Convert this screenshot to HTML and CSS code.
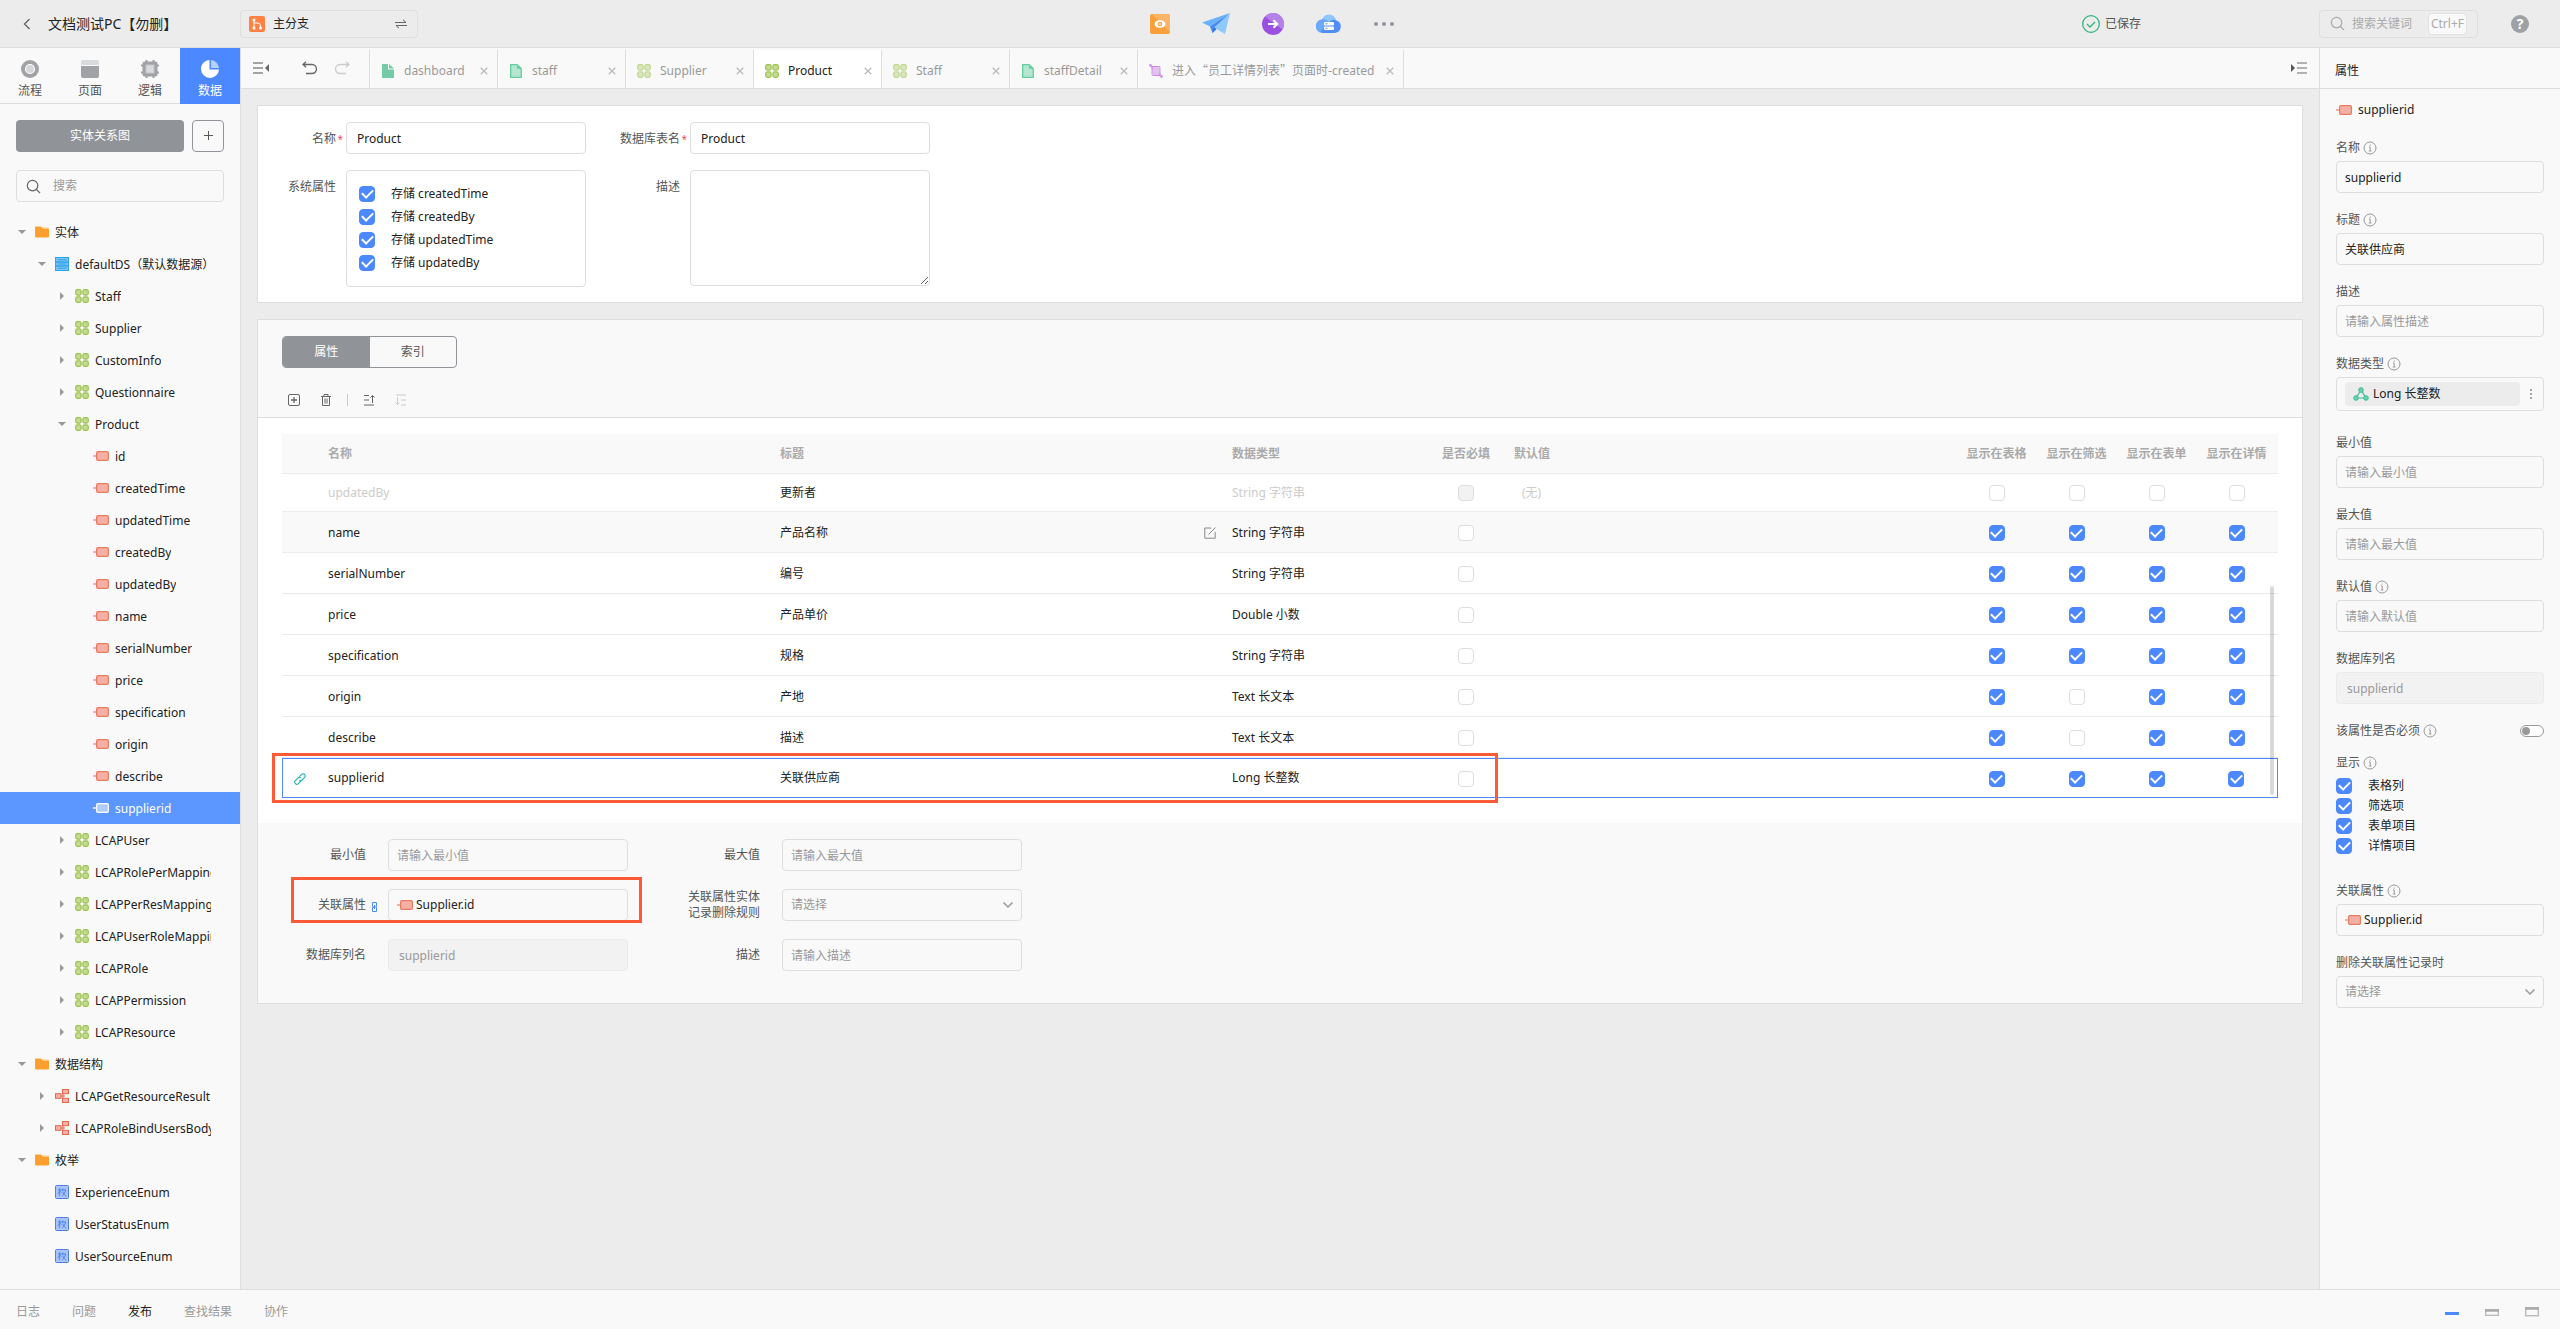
FILE: index.html
```html
<!DOCTYPE html>
<html lang="zh-CN">

<head>
    <meta charset="UTF-8" />
    <meta name="viewport" content="width=device-width, initial-scale=1.0" />
    <title>文档测试PC【勿删】</title>
    <link rel="stylesheet" href="styles.css">
</head>

<body>
    <!-- icon sprite -->
    <svg class="sprite" aria-hidden="true">
        <symbol id="i-entity" viewBox="0 0 14 14">
            <g fill="#c5dc94" stroke="#9bc04d" stroke-width="1.2">
                <rect x=".7" y=".7" width="5.4" height="5.4" rx="1.8" />
                <rect x="7.9" y=".7" width="5.4" height="5.4" rx="1.8" />
                <rect x=".7" y="7.9" width="5.4" height="5.4" rx="1.8" />
                <rect x="7.9" y="7.9" width="5.4" height="5.4" rx="1.8" />
            </g>
        </symbol>
        <symbol id="i-attr" viewBox="0 0 16 12">
            <path d="M0 6h4" stroke="#f4b0a5" stroke-width="2" />
            <rect x="3.6" y="1.6" width="11.8" height="8.8" rx="1.4" fill="#f4b0a5" stroke="#e9795f" stroke-width="1.2" />
        </symbol>
        <symbol id="i-attr-on" viewBox="0 0 16 12">
            <path d="M0 6h4" stroke="#cfdfff" stroke-width="2" />
            <rect x="3.6" y="1.6" width="11.8" height="8.8" rx="1.4" fill="#b3ccff" stroke="#fff" stroke-width="1.2" />
        </symbol>
        <symbol id="i-folder" viewBox="0 0 14 12">
            <path d="M6 1.5h7a1 1 0 0 1 1 1V5H6z" fill="#ffc988" />
            <path d="M1 .5h5L7.5 3H13a1 1 0 0 1 1 1v6.500a1 1 0 0 1-1 1H1a1 1 0 0 1-1-1v-9a1 1 0 0 1 1-1z" fill="#ff9f2e" />
        </symbol>
        <symbol id="i-db" viewBox="0 0 14 14">
            <rect x=".5" y=".5" width="13" height="13" fill="#7cc4f7" stroke="#2da2f0" />
            <path d="M1 5h12M1 9h12" stroke="#1b8fe0" stroke-width="1.2" />
            <path d="M2.500 2.800h9M2.500 7h9M2.500 11.200h9" stroke="#2da2f0" />
        </symbol>
        <symbol id="i-struct" viewBox="0 0 14 14">
            <g fill="#f4b0a5" stroke="#e9664d">
                <path d="M6 7h4M8 2.500v9" fill="none" />
                <rect x=".5" y="4.700" width="5.500" height="4.600" />
                <rect x="7.500" y=".5" width="6" height="4.200" />
                <rect x="7.500" y="9.300" width="6" height="4.200" />
            </g>
        </symbol>
        <symbol id="i-enum" viewBox="0 0 14 14">
            <rect x=".5" y=".5" width="13" height="13" rx="1" fill="#a9c4f8" stroke="#4a80ee" />
            <path d="M3 5h3.500M4.700 3v8M3 9l1.700-3L6.500 7.500M8 3.200 7 6M7.500 5H11M10.500 5c-.5 3-1.500 4.500-3.500 6M7.700 6.500c.5 2 1.500 3.500 3.500 4.500" fill="none" stroke="#4a80ee" stroke-width=".9" />
        </symbol>
        <symbol id="i-page" viewBox="0 0 12 14">
            <path d="M.7.7H7l4.300 4v8.600H.7z" fill="#b5e6cf" stroke="#63cd9f" stroke-width="1.300" />
            <path d="M7 .7v4h4.300z" fill="#63cd9f" />
        </symbol>
        <symbol id="i-page-solid" viewBox="0 0 12 14">
            <path d="M0 0h6v5.500h6V14H0z" fill="#74cba6" />
            <path d="M7 0l5 4.500H7z" fill="#74cba6" />
        </symbol>
        <symbol id="i-event" viewBox="0 0 14 14">
            <path d="M1 1l12 12" stroke="#d09be5" />
            <rect x="3" y="2.500" width="8" height="9" rx="1" fill="#e3c0f0" stroke="#d09be5" />
            <path d="M3 5.500V2.500h6M5 11.500h6V9" fill="none" stroke="#c987e2" />
            <circle cx="1.500" cy="1.500" r="1.400" fill="#cf93e6" />
            <circle cx="12.500" cy="12.500" r="1.400" fill="#cf93e6" />
        </symbol>
        <symbol id="i-search" viewBox="0 0 16 16">
            <circle cx="7" cy="7" r="5.600" fill="none" stroke="currentColor" stroke-width="1.300" />
            <path d="M11.200 11.200 15 15" stroke="currentColor" stroke-width="1.300" />
        </symbol>
        <symbol id="i-close" viewBox="0 0 8 8">
            <path d="M.7.7l6.600 6.600M7.300.7.7 7.300" stroke="currentColor" stroke-width="1.300" />
        </symbol>
        <symbol id="i-info" viewBox="0 0 14 14">
            <circle cx="7" cy="7" r="6" fill="none" stroke="#999" />
            <path d="M6 6h1.200v4M5.800 10h2.600M7.200 3.500v1.200" fill="none" stroke="#999" />
        </symbol>
        <symbol id="i-chevron" viewBox="0 0 12 8">
            <path d="M1.500 1.500 6 6l4.500-4.500" fill="none" stroke="#999" stroke-width="1.500" />
        </symbol>
    </svg>

    <header class="topbar">
        <div class="topbar-left">
            <div class="app-name">
                <button class="icon-btn" aria-label="返回">
                    <svg width="8" height="12" viewBox="0 0 8 12"><path d="M6.500 1 1.500 6l5 5" fill="none" stroke="#666" stroke-width="1.400" /></svg>
                </button>
                <h1>文档测试PC【勿删】</h1>
            </div>
            <button class="branch">
                <svg width="16" height="16" viewBox="0 0 16 16">
                    <rect width="16" height="16" rx="2" fill="#ff8144" />
                    <path d="M5 4v8M5 7h3.500a3 3 0 0 1 3 3v2" fill="none" stroke="#fff" />
                    <circle cx="5" cy="4" r="1.500" fill="#fff" /><circle cx="5" cy="12" r="1.500" fill="#fff" /><circle cx="11.500" cy="12" r="1.500" fill="#fff" />
                </svg>
                <span>主分支</span>
                <svg width="12" height="10" viewBox="0 0 12 10"><path d="M0 3.500h11L8 .8M12 6.500H1l3 2.700" fill="none" stroke="#666" /></svg>
            </button>
        </div>

        <div class="topbar-actions">
            <button class="icon-btn" aria-label="预览">
                <svg width="20" height="20" viewBox="0 0 20 20">
                    <rect width="20" height="20" rx="2" fill="#f8a13c" />
                    <path d="M2 0h16a2 2 0 0 1 2 2v16z" fill="#fdb467" />
                    <ellipse cx="10" cy="10" rx="5.500" ry="3.800" fill="#fff" />
                    <circle cx="10" cy="10" r="2.300" fill="#f8a13c" /><circle cx="10" cy="10" r="1" fill="#fff" />
                </svg>
            </button>
            <button class="icon-btn" aria-label="发布">
                <svg width="28" height="22" viewBox="0 0 28 22">
                    <path d="M28 0 0 9.500l8 4z" fill="#69b1fb" />
                    <path d="M28 0 8 13.500 10.500 20z" fill="#4488f0" />
                    <path d="M28 0 12 14.500 23 21z" fill="#8ec9fd" />
                    <path d="M12 14.500 10.500 20l4-3.800z" fill="#2f74e4" />
                </svg>
            </button>
            <button class="icon-btn" aria-label="导出">
                <svg width="22" height="22" viewBox="0 0 22 22">
                    <circle cx="11" cy="11" r="11" fill="#9a51e0" />
                    <path d="M3 3.400A11 11 0 0 1 20.500 16.500z" fill="#b482e8" />
                    <path d="M6 11h9M11.500 7.300 15.200 11l-3.700 3.700" fill="none" stroke="#fff" stroke-width="2" />
                </svg>
            </button>
            <button class="icon-btn" aria-label="云资源">
                <svg width="26" height="20" viewBox="0 0 26 20">
                    <circle cx="13" cy="8" r="7.500" fill="#8fc6fd" />
                    <path d="M7 5.500a7 7 0 0 1 6 2.800 6 6 0 0 1 7-2 6.500 6.500 0 0 1-1 12.700H6.500A6.700 6.700 0 0 1 7 5.500z" fill="#4f8dfa" />
                    <path d="M7 5.500A7 7 0 0 1 13 8.300L4 18.400A6.700 6.700 0 0 1 7 5.500z" fill="#6ba9fc" />
                    <rect x="8" y="8" width="10" height="3.500" rx="1" fill="#fff" /><rect x="8" y="12.500" width="10" height="3.500" rx="1" fill="#fff" />
                    <path d="M9.500 9.800h2M9.500 14.300h2" stroke="#4f8dfa" />
                </svg>
            </button>
            <button class="icon-btn" aria-label="更多">
                <svg width="20" height="4" viewBox="0 0 20 4" fill="#8f959e"><circle cx="2" cy="2" r="2" /><circle cx="10" cy="2" r="2" /><circle cx="18" cy="2" r="2" /></svg>
            </button>
        </div>

        <div class="topbar-right">
            <span class="saved">
                <svg width="18" height="18" viewBox="0 0 18 18" fill="none" stroke="#2fb67c" stroke-width="1.300"><circle cx="9" cy="9" r="8.300" /><path d="M5 9l3 3 5-5" /></svg>
                已保存
            </span>
            <label class="quick-search">
                <svg width="15" height="15"><use href="#i-search" /></svg>
                <input type="text" placeholder="搜索关键词" aria-label="搜索关键词">
                <kbd>Ctrl+F</kbd>
            </label>
            <button class="icon-btn help" aria-label="帮助">?</button>
        </div>
    </header>

    <div class="workspace">
        <aside class="sidebar">
            <nav class="modules">
                <a href="#">
                    <svg width="18" height="18" viewBox="0 0 18 18"><circle cx="9" cy="9" r="9" fill="#a0a2a6" /><circle cx="9" cy="9" r="4.500" fill="#d6d7d9" stroke="#fff" stroke-width="1.200" /></svg>
                    流程
                </a>
                <a href="#">
                    <svg width="18" height="18" viewBox="0 0 18 18"><path d="M2 0h14a2 2 0 0 1 2 2v3H0V2a2 2 0 0 1 2-2z" fill="#d9dadc" /><path d="M0 6h18v10a2 2 0 0 1-2 2H2a2 2 0 0 1-2-2z" fill="#a0a2a6" /></svg>
                    页面
                </a>
                <a href="#">
                    <svg width="18" height="18" viewBox="0 0 18 18"><path d="M5.500 0v18M12.500 0v18M0 5.500h18M0 12.500h18" stroke="#a0a2a6" stroke-width="2" /><rect x="1.500" y="1.500" width="15" height="15" rx="2" fill="#a0a2a6" /><rect x="5" y="5" width="8" height="8" fill="#d9dadc" stroke="#c3c4c7" /></svg>
                    逻辑
                </a>
                <a href="#" class="active">
                    <svg width="18" height="18" viewBox="0 0 18 18"><path d="M8.500.0v9.500H18A9 9 0 1 1 8.500 0z" fill="#fff" /><path d="M10 0a9 9 0 0 1 8 8h-8z" fill="#b8d0ff" /></svg>
                    数据
                </a>
            </nav>

            <div class="sidebar-tools">
                <button class="btn-er">实体关系图</button>
                <button class="btn-add" aria-label="添加"><svg width="9" height="9" viewBox="0 0 9 9"><path d="M4.500 0v9M0 4.500h9" stroke="#555" /></svg></button>
            </div>
            <label class="search">
                <svg width="15" height="15"><use href="#i-search" /></svg>
                <input type="text" placeholder="搜索" aria-label="搜索">
            </label>

            <ul class="tree">
                <li class="lv1 open"><i></i><svg><use href="#i-folder" /></svg><span>实体</span></li>
                <li class="lv2 open"><i></i><svg><use href="#i-db" /></svg><span>defaultDS（默认数据源）</span></li>
                <li class="lv3 shut"><i></i><svg><use href="#i-entity" /></svg><span>Staff</span></li>
                <li class="lv3 shut"><i></i><svg><use href="#i-entity" /></svg><span>Supplier</span></li>
                <li class="lv3 shut"><i></i><svg><use href="#i-entity" /></svg><span>CustomInfo</span></li>
                <li class="lv3 shut"><i></i><svg><use href="#i-entity" /></svg><span>Questionnaire</span></li>
                <li class="lv3 open"><i></i><svg><use href="#i-entity" /></svg><span>Product</span></li>
                <li class="lv4"><i></i><svg><use href="#i-attr" /></svg><span>id</span></li>
                <li class="lv4"><i></i><svg><use href="#i-attr" /></svg><span>createdTime</span></li>
                <li class="lv4"><i></i><svg><use href="#i-attr" /></svg><span>updatedTime</span></li>
                <li class="lv4"><i></i><svg><use href="#i-attr" /></svg><span>createdBy</span></li>
                <li class="lv4"><i></i><svg><use href="#i-attr" /></svg><span>updatedBy</span></li>
                <li class="lv4"><i></i><svg><use href="#i-attr" /></svg><span>name</span></li>
                <li class="lv4"><i></i><svg><use href="#i-attr" /></svg><span>serialNumber</span></li>
                <li class="lv4"><i></i><svg><use href="#i-attr" /></svg><span>price</span></li>
                <li class="lv4"><i></i><svg><use href="#i-attr" /></svg><span>specification</span></li>
                <li class="lv4"><i></i><svg><use href="#i-attr" /></svg><span>origin</span></li>
                <li class="lv4"><i></i><svg><use href="#i-attr" /></svg><span>describe</span></li>
                <li class="lv4 selected"><i></i><svg><use href="#i-attr-on" /></svg><span>supplierid</span></li>
                <li class="lv3 shut"><i></i><svg><use href="#i-entity" /></svg><span>LCAPUser</span></li>
                <li class="lv3 shut"><i></i><svg><use href="#i-entity" /></svg><span>LCAPRolePerMapping</span></li>
                <li class="lv3 shut"><i></i><svg><use href="#i-entity" /></svg><span>LCAPPerResMapping</span></li>
                <li class="lv3 shut"><i></i><svg><use href="#i-entity" /></svg><span>LCAPUserRoleMapping</span></li>
                <li class="lv3 shut"><i></i><svg><use href="#i-entity" /></svg><span>LCAPRole</span></li>
                <li class="lv3 shut"><i></i><svg><use href="#i-entity" /></svg><span>LCAPPermission</span></li>
                <li class="lv3 shut"><i></i><svg><use href="#i-entity" /></svg><span>LCAPResource</span></li>
                <li class="lv1 open"><i></i><svg><use href="#i-folder" /></svg><span>数据结构</span></li>
                <li class="lv2 shut"><i></i><svg><use href="#i-struct" /></svg><span>LCAPGetResourceResult</span></li>
                <li class="lv2 shut"><i></i><svg><use href="#i-struct" /></svg><span>LCAPRoleBindUsersBody</span></li>
                <li class="lv1 open"><i></i><svg><use href="#i-folder" /></svg><span>枚举</span></li>
                <li class="lv2"><i></i><svg><use href="#i-enum" /></svg><span>ExperienceEnum</span></li>
                <li class="lv2"><i></i><svg><use href="#i-enum" /></svg><span>UserStatusEnum</span></li>
                <li class="lv2"><i></i><svg><use href="#i-enum" /></svg><span>UserSourceEnum</span></li>
            </ul>
        </aside>

        <div class="editor">
            <div class="tabbar">
                <div class="tabbar-tools">
                    <button class="icon-btn" aria-label="收起左侧"><svg width="17" height="12" viewBox="0 0 17 12"><path d="M0 1h10M0 6h10M0 11h10" stroke="#888" stroke-width="1.600" /><path d="M16 2v8l-4-4z" fill="#666" /></svg></button>
                    <button class="icon-btn undo" aria-label="撤销"><svg width="16" height="14" viewBox="0 0 16 14"><path d="M1 3.500h9a4.500 4.500 0 0 1 0 9H4M4 .7 1 3.500l3 2.800" fill="none" stroke="#666" stroke-width="1.300" /></svg></button>
                    <button class="icon-btn" aria-label="重做" disabled><svg width="16" height="14" viewBox="0 0 16 14"><path d="M15 3.500H6a4.500 4.500 0 0 0 0 9h6M12 .7l3 2.800-3 2.800" fill="none" stroke="#ccc" stroke-width="1.300" /></svg></button>
                </div>
                <nav class="tabs">
                    <a href="#"><svg width="12" height="14"><use href="#i-page-solid" /></svg><span>dashboard</span><svg class="close" width="8" height="8"><use href="#i-close" /></svg></a>
                    <a href="#"><svg width="12" height="14"><use href="#i-page" /></svg><span>staff</span><svg class="close" width="8" height="8"><use href="#i-close" /></svg></a>
                    <a href="#"><svg class="dim" width="14" height="14"><use href="#i-entity" /></svg><span>Supplier</span><svg class="close" width="8" height="8"><use href="#i-close" /></svg></a>
                    <a href="#" class="active"><svg width="14" height="14"><use href="#i-entity" /></svg><span>Product</span><svg class="close" width="8" height="8"><use href="#i-close" /></svg></a>
                    <a href="#"><svg class="dim" width="14" height="14"><use href="#i-entity" /></svg><span>Staff</span><svg class="close" width="8" height="8"><use href="#i-close" /></svg></a>
                    <a href="#"><svg width="12" height="14"><use href="#i-page" /></svg><span>staffDetail</span><svg class="close" width="8" height="8"><use href="#i-close" /></svg></a>
                    <a href="#" class="wide"><svg width="14" height="14"><use href="#i-event" /></svg><span>进入<b class="zh">“</b>员工详情列表<b class="zh">”</b>页面时-created</span><svg class="close" width="8" height="8"><use href="#i-close" /></svg></a>
                </nav>
                <button class="icon-btn collapse-right" aria-label="收起右侧"><svg width="17" height="12" viewBox="0 0 17 12"><path d="M7 1h10M7 6h10M7 11h10" stroke="#999" stroke-width="1.600" /><path d="M1 2v8l4-4z" fill="#555" /></svg></button>
            </div>

            <main class="canvas">
                <section class="card info">
                    <label class="lb req" for="e-name">名称</label>
                    <input class="field" id="e-name" type="text" value="Product">
                    <label class="lb req" for="e-table">数据库表名</label>
                    <input class="field" id="e-table" type="text" value="Product">
                    <span class="lb">系统属性</span>
                    <div class="sys-attrs">
                        <label><input type="checkbox" checked>存储 createdTime</label>
                        <label><input type="checkbox" checked>存储 createdBy</label>
                        <label><input type="checkbox" checked>存储 updatedTime</label>
                        <label><input type="checkbox" checked>存储 updatedBy</label>
                    </div>
                    <label class="lb" for="e-desc">描述</label>
                    <textarea class="field" id="e-desc"></textarea>
                </section>

                <section class="card attrs">
                    <div class="attrs-head">
                        <div class="segment">
                            <button class="active">属性</button>
                            <button>索引</button>
                        </div>
                        <div class="attrs-tools">
                            <button class="icon-btn" aria-label="新增"><svg width="12" height="12" viewBox="0 0 12 12" fill="none" stroke="#666"><rect x=".5" y=".5" width="11" height="11" rx="1.500" /><path d="M6 3v6M3 6h6" stroke-width="1.300" /></svg></button>
                            <button class="icon-btn" aria-label="删除"><svg width="12" height="12" viewBox="0 0 12 12" fill="none" stroke="#666"><path d="M1 2.500h10M4 2.500v-2h4v2M2.500 2.500v9h7v-9M5 4.500v5M7 4.500v5" /></svg></button>
                            <span class="sep"></span>
                            <button class="icon-btn" aria-label="上移"><svg width="12" height="12" viewBox="0 0 12 12" fill="none" stroke="#666"><path d="M1 1.500h5M1 6h5M1 11h10M9.500 9V1.500M7.500 3.500l2-2 2 2" /></svg></button>
                            <button class="icon-btn" aria-label="下移" disabled><svg width="12" height="12" viewBox="0 0 12 12" fill="none" stroke="#ccc"><path d="M1 1h10M6 6h5M6 11h5M2.500 3v7.500M.5 8.500l2 2 2-2" /></svg></button>
                        </div>
                    </div>

                    <div class="table-wrap">
                        <table>
                            <colgroup>
                                <col class="c-link"><col><col><col class="c-type"><col class="c-check"><col>
                                <col class="c-check"><col class="c-check"><col class="c-check"><col class="c-check">
                            </colgroup>
                            <thead>
                                <tr><th></th><th>名称</th><th>标题</th><th>数据类型</th><th class="mid">是否必填</th><th>默认值</th><th class="mid show">显示在表格</th><th class="mid show">显示在筛选</th><th class="mid show">显示在表单</th><th class="mid show">显示在详情</th></tr>
                            </thead>
                            <tbody>
                                <tr class="scrolled"><td></td><td>updatedBy</td><td class="strong">更新者</td><td>String 字符串</td><td class="mid"><input type="checkbox" aria-label="必填" disabled></td><td class="none">(无)</td><td class="mid show"><input type="checkbox" aria-label="表格"></td><td class="mid show"><input type="checkbox" aria-label="筛选"></td><td class="mid show"><input type="checkbox" aria-label="表单"></td><td class="mid show"><input type="checkbox" aria-label="详情"></td></tr>
                                <tr class="hover"><td></td><td>name</td><td><div class="editable">产品名称 <button class="icon-btn" aria-label="编辑"><svg width="12" height="12" viewBox="0 0 12 12" fill="none" stroke="#888"><path d="M7 1H.8v10.200h10.400V5M4.500 7.500 11.500.5" /></svg></button></div></td><td>String 字符串</td><td class="mid"><input type="checkbox" aria-label="必填"></td><td></td><td class="mid show"><input type="checkbox" aria-label="表格" checked></td><td class="mid show"><input type="checkbox" aria-label="筛选" checked></td><td class="mid show"><input type="checkbox" aria-label="表单" checked></td><td class="mid show"><input type="checkbox" aria-label="详情" checked></td></tr>
                                <tr><td></td><td>serialNumber</td><td>编号</td><td>String 字符串</td><td class="mid"><input type="checkbox" aria-label="必填"></td><td></td><td class="mid show"><input type="checkbox" aria-label="表格" checked></td><td class="mid show"><input type="checkbox" aria-label="筛选" checked></td><td class="mid show"><input type="checkbox" aria-label="表单" checked></td><td class="mid show"><input type="checkbox" aria-label="详情" checked></td></tr>
                                <tr><td></td><td>price</td><td>产品单价</td><td>Double 小数</td><td class="mid"><input type="checkbox" aria-label="必填"></td><td></td><td class="mid show"><input type="checkbox" aria-label="表格" checked></td><td class="mid show"><input type="checkbox" aria-label="筛选" checked></td><td class="mid show"><input type="checkbox" aria-label="表单" checked></td><td class="mid show"><input type="checkbox" aria-label="详情" checked></td></tr>
                                <tr><td></td><td>specification</td><td>规格</td><td>String 字符串</td><td class="mid"><input type="checkbox" aria-label="必填"></td><td></td><td class="mid show"><input type="checkbox" aria-label="表格" checked></td><td class="mid show"><input type="checkbox" aria-label="筛选" checked></td><td class="mid show"><input type="checkbox" aria-label="表单" checked></td><td class="mid show"><input type="checkbox" aria-label="详情" checked></td></tr>
                                <tr><td></td><td>origin</td><td>产地</td><td>Text 长文本</td><td class="mid"><input type="checkbox" aria-label="必填"></td><td></td><td class="mid show"><input type="checkbox" aria-label="表格" checked></td><td class="mid show"><input type="checkbox" aria-label="筛选"></td><td class="mid show"><input type="checkbox" aria-label="表单" checked></td><td class="mid show"><input type="checkbox" aria-label="详情" checked></td></tr>
                                <tr><td></td><td>describe</td><td>描述</td><td>Text 长文本</td><td class="mid"><input type="checkbox" aria-label="必填"></td><td></td><td class="mid show"><input type="checkbox" aria-label="表格" checked></td><td class="mid show"><input type="checkbox" aria-label="筛选"></td><td class="mid show"><input type="checkbox" aria-label="表单" checked></td><td class="mid show"><input type="checkbox" aria-label="详情" checked></td></tr>
                                <tr class="current"><td class="mid show"><svg width="12" height="12" viewBox="0 0 12 12" fill="none" stroke="#2bb8b0" stroke-width="1.200"><path d="M5.200 3.800 7.600 1.400a2.100 2.100 0 0 1 3 3L8 7a2.100 2.100 0 0 1-2.700.2M6.800 8.200l-2.400 2.400a2.100 2.100 0 0 1-3-3L4 5a2.100 2.100 0 0 1 2.700-.2" /></svg></td><td>supplierid</td><td>关联供应商</td><td>Long 长整数</td><td class="mid"><input type="checkbox" aria-label="必填"></td><td></td><td class="mid show"><input type="checkbox" aria-label="表格" checked></td><td class="mid show"><input type="checkbox" aria-label="筛选" checked></td><td class="mid show"><input type="checkbox" aria-label="表单" checked></td><td class="mid show"><input type="checkbox" aria-label="详情" checked></td></tr>
                            </tbody>
                        </table>
                        <span class="scroll-thumb"></span>
                        <span class="mark mark-row"></span>
                    </div>

                    <div class="detail">
                        <label class="lb" for="d-min">最小值</label>
                        <input class="field" id="d-min" type="text" placeholder="请输入最小值">
                        <label class="lb" for="d-max">最大值</label>
                        <input class="field" id="d-max" type="text" placeholder="请输入最大值">

                        <span class="lb lb-link" id="d-rel">关联属性<svg width="8" height="12" viewBox="0 0 8 12" fill="none" stroke="#4c88ff"><path d="M2.500 5.500H1.500v-4h4v4h-1M3.500 6.500h-2v4h4v-4h-1M3.500 4v4" /></svg></span>
                        <button class="field relation" aria-labelledby="d-rel"><svg width="16" height="12"><use href="#i-attr" /></svg>Supplier.id</button>
                        <label class="lb" for="d-rule">关联属性实体<br>记录删除规则</label>
                        <div class="select">
                            <select class="field" id="d-rule"><option>请选择</option></select>
                            <svg width="12" height="8"><use href="#i-chevron" /></svg>
                        </div>

                        <label class="lb" for="d-col">数据库列名</label>
                        <input class="field" id="d-col" type="text" value="supplierid" disabled>
                        <label class="lb" for="d-desc">描述</label>
                        <input class="field" id="d-desc" type="text" placeholder="请输入描述">
                        <span class="mark mark-relation"></span>
                    </div>
                </section>
            </main>
        </div>

        <aside class="props">
            <h2>属性</h2>
            <div class="props-body">
                <div class="props-title"><svg width="16" height="12"><use href="#i-attr" /></svg>supplierid</div>
                <div class="prop"><label for="p-name">名称<svg><use href="#i-info" /></svg></label><input class="field" id="p-name" type="text" value="supplierid"></div>
                <div class="prop"><label for="p-title">标题<svg><use href="#i-info" /></svg></label><input class="field" id="p-title" type="text" value="关联供应商"></div>
                <div class="prop"><label for="p-desc">描述</label><input class="field" id="p-desc" type="text" placeholder="请输入属性描述"></div>
                <div class="prop prop-type">
                    <label for="p-type">数据类型<svg><use href="#i-info" /></svg></label>
                    <div class="type-box">
                        <button class="type-chip" id="p-type">
                            <svg width="16" height="14" viewBox="0 0 16 14"><path d="M8 3 3 11h10z" fill="none" stroke="#3dbd95" stroke-width="1.200" /><g fill="#6bd0b0" stroke="#3dbd95"><circle cx="8" cy="3" r="2.300" /><circle cx="3" cy="11" r="2.300" /><circle cx="13" cy="11" r="2.300" /></g></svg>
                            Long 长整数
                        </button>
                        <button class="icon-btn" aria-label="更多"><svg width="4" height="12" viewBox="0 0 4 12" fill="#888"><circle cx="2" cy="2" r="1" /><circle cx="2" cy="6" r="1" /><circle cx="2" cy="10" r="1" /></svg></button>
                    </div>
                </div>
                <div class="prop"><label for="p-min">最小值</label><input class="field" id="p-min" type="text" placeholder="请输入最小值"></div>
                <div class="prop"><label for="p-max">最大值</label><input class="field" id="p-max" type="text" placeholder="请输入最大值"></div>
                <div class="prop"><label for="p-def">默认值<svg><use href="#i-info" /></svg></label><input class="field" id="p-def" type="text" placeholder="请输入默认值"></div>
                <div class="prop"><label for="p-col">数据库列名</label><input class="field" id="p-col" type="text" value="supplierid" disabled></div>
                <div class="prop prop-switch"><label for="p-req">该属性是否必须<svg><use href="#i-info" /></svg></label><input class="switch" id="p-req" type="checkbox" role="switch"></div>
                <div class="prop prop-show">
                    <span class="caption">显示<svg><use href="#i-info" /></svg></span>
                    <label><input type="checkbox" checked>表格列</label>
                    <label><input type="checkbox" checked>筛选项</label>
                    <label><input type="checkbox" checked>表单项目</label>
                    <label><input type="checkbox" checked>详情项目</label>
                </div>
                <div class="prop"><label for="p-rel">关联属性<svg><use href="#i-info" /></svg></label><button class="field relation" id="p-rel"><svg width="16" height="12"><use href="#i-attr" /></svg>Supplier.id</button></div>
                <div class="prop">
                    <label for="p-del">删除关联属性记录时</label>
                    <div class="select">
                        <select class="field" id="p-del"><option>请选择</option></select>
                        <svg width="12" height="8"><use href="#i-chevron" /></svg>
                    </div>
                </div>
            </div>
        </aside>
    </div>

    <footer class="bottombar">
        <a href="#">日志</a>
        <a href="#">问题</a>
        <a href="#" class="active">发布</a>
        <a href="#">查找结果</a>
        <a href="#">协作</a>
        <div class="panel-size">
            <button class="icon-btn" aria-label="最小化"><svg width="14" height="12" viewBox="0 0 14 12"><path d="M0 7.500h14" stroke="#4c88ff" stroke-width="3" /></svg></button>
            <button class="icon-btn" aria-label="半屏"><svg width="14" height="12" viewBox="0 0 14 12"><rect x=".7" y="3.700" width="12.600" height="5.600" fill="none" stroke="#bbb" stroke-width="1.400" /><path d="M0 4.500h14" stroke="#aaa" stroke-width="2.500" /></svg></button>
            <button class="icon-btn" aria-label="全屏"><svg width="14" height="12" viewBox="0 0 14 12"><rect x=".7" y="1.700" width="12.600" height="8" fill="none" stroke="#bbb" stroke-width="1.400" /><path d="M0 2.500h14" stroke="#aaa" stroke-width="2.500" /></svg></button>
        </div>
    </footer>
</body>

</html>
```
FILE: styles.css
```css
:root {
    --bg: #ececec;
    --panel: #f9f9f9;
    --line: #dedede;
    --blue: #4c88ff;
    --gray: #909499;
    --txt: #222;
    --txt-label: #555;
    --txt-mute: #999;
    --mark: #ff5a36;
}

* {
    box-sizing: border-box;
    margin: 0;
    padding: 0;
}

body {
    display: flex;
    flex-direction: column;
    min-height: 100vh;
    font-family: "Noto Sans", "Noto Sans CJK SC", sans-serif;
    font-size: 12px;
    line-height: 20px;
    color: var(--txt);
    background: var(--panel);
}

a {
    color: inherit;
    text-decoration: none;
}

button,
input,
select,
textarea {
    font: inherit;
    color: inherit;
}

button {
    background: none;
    border: 0;
}

svg {
    flex: none;
}

::placeholder {
    color: var(--txt-mute);
    opacity: 1;
}

.sprite {
    position: absolute;
    width: 0;
    height: 0;
}

.icon-btn {
    display: flex;
    align-items: center;
    justify-content: center;
}

/* inputs */
.field {
    display: block;
    width: 100%;
    height: 32px;
    padding: 0 8px;
    border: 1px solid var(--line);
    border-radius: 4px;
    background: transparent;
    outline: none;
}

.field:disabled {
    padding: 0 10px;
    border-color: #ebebeb;
    background: #f2f2f2;
    color: var(--txt-mute);
}

.relation {
    display: flex;
    align-items: center;
    gap: 3px;
}

.select {
    position: relative;
}

.select .field {
    appearance: none;
    color: var(--txt-mute);
}

.select svg {
    position: absolute;
    top: 12px;
    right: 8px;
    pointer-events: none;
}

input[type="checkbox"] {
    display: inline-flex;
    flex: none;
    align-items: center;
    justify-content: center;
    width: 16px;
    height: 16px;
    border: 1px solid var(--line);
    border-radius: 4px;
    background: #fff;
    appearance: none;
    vertical-align: middle;
}

input[type="checkbox"]:disabled {
    background: #f2f2f2;
}

input[type="checkbox"]:not(.switch):checked {
    border-color: var(--blue);
    background: var(--blue);
}

input[type="checkbox"]:not(.switch):checked::after {
    content: "";
    width: 9px;
    height: 5px;
    margin-bottom: 3px;
    border: solid #fff;
    border-width: 0 0 2px 2px;
    transform: rotate(-45deg);
}

/* top bar */
.topbar {
    display: grid;
    grid-template-columns: 1fr auto 1fr;
    align-items: center;
    height: 48px;
    padding-right: 16px;
    border-bottom: 1px solid var(--line);
    background: var(--bg);
}

.topbar-left,
.topbar-right,
.topbar-actions,
.app-name,
.saved {
    display: flex;
    align-items: center;
}

.app-name {
    width: 240px;
    padding-left: 23px;
    gap: 17px;
}

.app-name h1 {
    font-size: 14px;
    font-weight: 400;
    white-space: nowrap;
}

.branch {
    display: flex;
    align-items: center;
    gap: 8px;
    width: 178px;
    height: 28px;
    padding: 0 10px 0 8px;
    border: 1px solid var(--line);
    border-radius: 4px;
}

.branch span {
    flex: 1;
    text-align: left;
}

.topbar-actions {
    gap: 32px;
}

.topbar-right {
    justify-content: flex-end;
}

.saved {
    gap: 5px;
    color: var(--txt-label);
}

.quick-search {
    display: flex;
    align-items: center;
    gap: 7px;
    width: 159px;
    height: 28px;
    margin: 0 33px 0 178px;
    padding: 0 10px;
    border: 1px solid var(--line);
    border-radius: 4px;
    color: #aaa;
}

.quick-search input {
    flex: 1;
    width: 0;
    border: 0;
    background: none;
}

.quick-search ::placeholder {
    color: #aaa;
}

.quick-search kbd {
    padding: 0 2px;
    border: 1px solid #e2e2e2;
    border-radius: 4px;
    background: var(--panel);
    font: inherit;
    line-height: 20px;
}

.help {
    width: 18px;
    height: 18px;
    margin-right: 15px;
    border-radius: 50%;
    background: #9da0a4;
    color: #fff;
    font-size: 14px;
    font-weight: 700;
}

.workspace {
    display: flex;
    flex: 1;
}

/* left panel */
.sidebar {
    flex: none;
    width: 241px;
    border-right: 1px solid var(--line);
}

.modules {
    display: flex;
    height: 56px;
    border-bottom: 1px solid var(--line);
    color: var(--txt-label);
}

.modules a {
    display: flex;
    flex: 1;
    flex-direction: column;
    align-items: center;
    gap: 4px;
    height: 56px;
    padding-top: 12px;
    line-height: 18px;
}

.modules .active {
    background: var(--blue);
    color: #fff;
}

.sidebar-tools {
    display: flex;
    gap: 8px;
    padding: 16px 16px 18px;
}

.sidebar-tools button {
    height: 32px;
    border-radius: 4px;
}

.btn-er {
    flex: 1;
    background: var(--gray);
    color: #fff;
}

.btn-add {
    width: 32px;
    border: 1px solid var(--gray);
}

.search {
    display: flex;
    align-items: center;
    gap: 12px;
    height: 32px;
    margin: 0 16px;
    padding: 0 9px;
    border: 1px solid var(--line);
    border-radius: 4px;
    color: #666;
}

.search input {
    flex: 1;
    width: 0;
    border: 0;
    background: none;
}

.tree {
    padding: 14px 0 12px;
    list-style: none;
}

.tree li {
    display: flex;
    align-items: center;
    height: 32px;
    padding-right: 29px;
}

.tree .lv1 {
    padding-left: 17px;
}

.tree .lv2 {
    padding-left: 37px;
}

.tree .lv3 {
    padding-left: 57px;
}

.tree .lv4 {
    padding-left: 77px;
}

.tree i {
    display: flex;
    flex: none;
    align-items: center;
    justify-content: center;
    width: 10px;
    margin-right: 8px;
}

.tree i::before {
    content: "";
    border: 4px solid transparent;
}

.tree .open i::before {
    border-top-color: #999;
    border-bottom: 0;
}

.tree .shut i::before {
    border-left-color: #999;
    border-right: 0;
}

.tree svg {
    width: 14px;
    height: 14px;
    margin-right: 6px;
}

.tree .lv4 svg {
    width: 16px;
    margin-left: -2px;
}

.tree span {
    padding-top: 2px;
    overflow: hidden;
    white-space: nowrap;
}

.tree .selected {
    background: #5c97ff;
    color: #fff;
}

/* tabs */
.editor {
    display: flex;
    flex: 1;
    flex-direction: column;
    min-width: 0;
}

.tabbar {
    display: flex;
    align-items: flex-end;
    height: 41px;
    border-bottom: 1px solid var(--line);
}

.tabbar-tools {
    display: flex;
    align-items: center;
    gap: 16px;
    width: 128px;
    height: 40px;
    padding-left: 12px;
}

.undo {
    margin-left: 16px;
}

.tabs {
    display: flex;
}

.tabs a {
    display: flex;
    align-items: center;
    gap: 9px;
    width: 128px;
    height: 38px;
    padding: 3px 9px 0 11px;
    border-left: 1px solid var(--line);
    color: var(--txt-mute);
    white-space: nowrap;
}

.tabs .wide {
    width: 267px;
    border-right: 1px solid var(--line);
}

.tabs span {
    flex: 1;
}

.tabs svg:first-child {
    width: 14px;
}

.tabs .active {
    background: #fff;
    color: var(--txt);
}

.tabs .close {
    color: #bbb;
}

.dim {
    opacity: .6;
}

.zh {
    font-family: "Noto Sans CJK SC", sans-serif;
    font-weight: 400;
}

.collapse-right {
    height: 40px;
    margin: 0 12px 0 auto;
}

/* canvas */
.canvas {
    display: flex;
    flex: 1;
    flex-direction: column;
    gap: 16px;
    padding: 16px;
    background: var(--bg);
}

.card {
    border: 1px solid var(--line);
    background: #fff;
}

.lb {
    color: var(--txt-label);
    text-align: right;
}

.info {
    display: grid;
    grid-template-columns: 88px 240px 104px 240px;
    row-gap: 16px;
    padding: 16px 0 15px;
}

.info .field {
    padding: 0 10px;
}

.info .lb {
    position: relative;
    padding: 7px 10px 0 0;
}

.req::after {
    content: "*";
    position: absolute;
    right: 3px;
    color: #e8555f;
    font-size: 10px;
}

.info textarea {
    height: 116px;
    resize: both;
}

.sys-attrs {
    display: flex;
    flex-direction: column;
    justify-content: center;
    gap: 3px;
    height: 117px;
    padding: 0 12px;
    border: 1px solid var(--line);
    border-radius: 4px;
}

.sys-attrs label {
    display: flex;
    align-items: center;
    gap: 16px;
}

.attrs {
    background: var(--panel);
}

.attrs-head {
    padding: 16px 24px 0;
    border-bottom: 1px solid var(--line);
}

.segment {
    display: flex;
    width: 175px;
    height: 32px;
    overflow: hidden;
    border: 1px solid var(--gray);
    border-radius: 4px;
    color: var(--txt-label);
}

.segment button {
    flex: 1;
}

.segment .active {
    background: var(--gray);
    color: #fff;
}

.attrs-tools {
    display: flex;
    align-items: center;
    gap: 20px;
    height: 49px;
    padding: 14px 6px 0;
}

.attrs-tools .sep {
    width: 1px;
    height: 12px;
    margin: 0 -5px;
    background: #ccc;
}

/* attribute table */
.table-wrap {
    position: relative;
    padding: 16px 24px 25px;
    background: #fff;
}

table {
    width: 100%;
    table-layout: fixed;
    border-collapse: separate;
    border-spacing: 0;
}

.c-link {
    width: 38px;
}

.c-type {
    width: 202px;
}

.c-check {
    width: 80px;
}

th,
td {
    height: 41px;
    padding: 2px 8px 0;
    border-bottom: 1px solid #ebebeb;
    text-align: left;
}

th {
    height: 40px;
    padding: 0 8px;
    background: var(--panel);
    color: #aaa;
    font-weight: 700;
}

th.mid,
td.mid {
    padding: 0;
    text-align: center;
}

th.show,
td.show {
    padding-right: 3px;
}

td svg {
    vertical-align: middle;
}

.scrolled td {
    height: 38px;
    padding-top: 0;
    color: #ccc;
}

.scrolled .strong {
    color: var(--txt);
}

.scrolled .none {
    padding-left: 16px;
}

.hover td {
    background: var(--panel);
}

.editable {
    display: flex;
    justify-content: space-between;
}

.current td {
    height: 40px;
    padding-top: 0;
    border-top: 1px solid var(--blue);
    border-bottom-color: var(--blue);
}

.current td:first-child {
    border-left: 1px solid var(--blue);
}

.current td:last-child {
    border-right: 1px solid var(--blue);
}

.scroll-thumb {
    position: absolute;
    right: 28px;
    bottom: 28px;
    width: 4px;
    height: 209px;
    border-radius: 2px;
    background: rgba(0, 0, 0, .15);
}

/* highlight frames */
.mark {
    position: absolute;
    border: 3px solid var(--mark);
    pointer-events: none;
}

.mark-row {
    bottom: 20px;
    left: 14px;
    width: 1226px;
    height: 50px;
}

.mark-relation {
    top: 54px;
    left: 33px;
    width: 351px;
    height: 46px;
}

.detail {
    position: relative;
    display: grid;
    grid-template-columns: 108px 240px 110px 240px;
    align-items: center;
    column-gap: 22px;
    row-gap: 18px;
    padding: 16px 0 32px;
}

.detail .lb {
    height: 32px;
    line-height: 32px;
}

.detail .lb:has(br) {
    line-height: 16px;
}

.lb-link {
    position: relative;
}

.lb-link svg {
    position: absolute;
    top: 12px;
    right: -13px;
}

/* right panel */
.props {
    flex: none;
    width: 241px;
    border-left: 1px solid var(--line);
}

.props h2 {
    height: 41px;
    padding: 4px 15px 0;
    border-bottom: 1px solid var(--line);
    font-size: 12px;
    font-weight: 400;
    line-height: 38px;
}

.props-body {
    padding: 11px 16px;
}

.props-title {
    display: flex;
    align-items: center;
    gap: 6px;
    margin-bottom: 18px;
}

.prop {
    margin-bottom: 17px;
}

.prop > label,
.caption {
    display: flex;
    align-items: center;
    gap: 3px;
    margin-bottom: 3px;
    color: var(--txt-label);
}

.prop label svg,
.caption svg {
    width: 14px;
    height: 14px;
}

.prop-type {
    margin-bottom: 22px;
}

.type-box {
    display: flex;
    align-items: center;
    justify-content: space-between;
    height: 34px;
    padding: 0 10px 0 8px;
    border: 1px solid var(--line);
    border-radius: 4px;
}

.type-chip {
    display: flex;
    align-items: center;
    gap: 4px;
    width: 175px;
    height: 24px;
    padding: 0 8px;
    border-radius: 4px;
    background: var(--bg);
}

.prop-switch {
    display: flex;
    align-items: center;
    justify-content: space-between;
    margin-bottom: 12px;
}

.prop-switch > label {
    margin: 0;
}

input.switch {
    justify-content: flex-start;
    width: 24px;
    height: 12px;
    padding-left: 1px;
    border-color: var(--txt-mute);
    border-radius: 6px;
}

.switch::after {
    content: "";
    width: 8px;
    height: 8px;
    border-radius: 50%;
    background: var(--txt-mute);
}

.prop-show {
    margin-bottom: 25px;
}

.prop-show > label {
    gap: 16px;
    margin: 0;
    color: var(--txt);
}

/* bottom bar */
.bottombar {
    display: flex;
    align-items: center;
    gap: 32px;
    height: 40px;
    padding: 4px 21px 0 16px;
    border-top: 1px solid var(--line);
    color: var(--txt-mute);
}

.bottombar .active {
    color: var(--txt);
}

.panel-size {
    display: flex;
    gap: 26px;
    margin-left: auto;
}
```
